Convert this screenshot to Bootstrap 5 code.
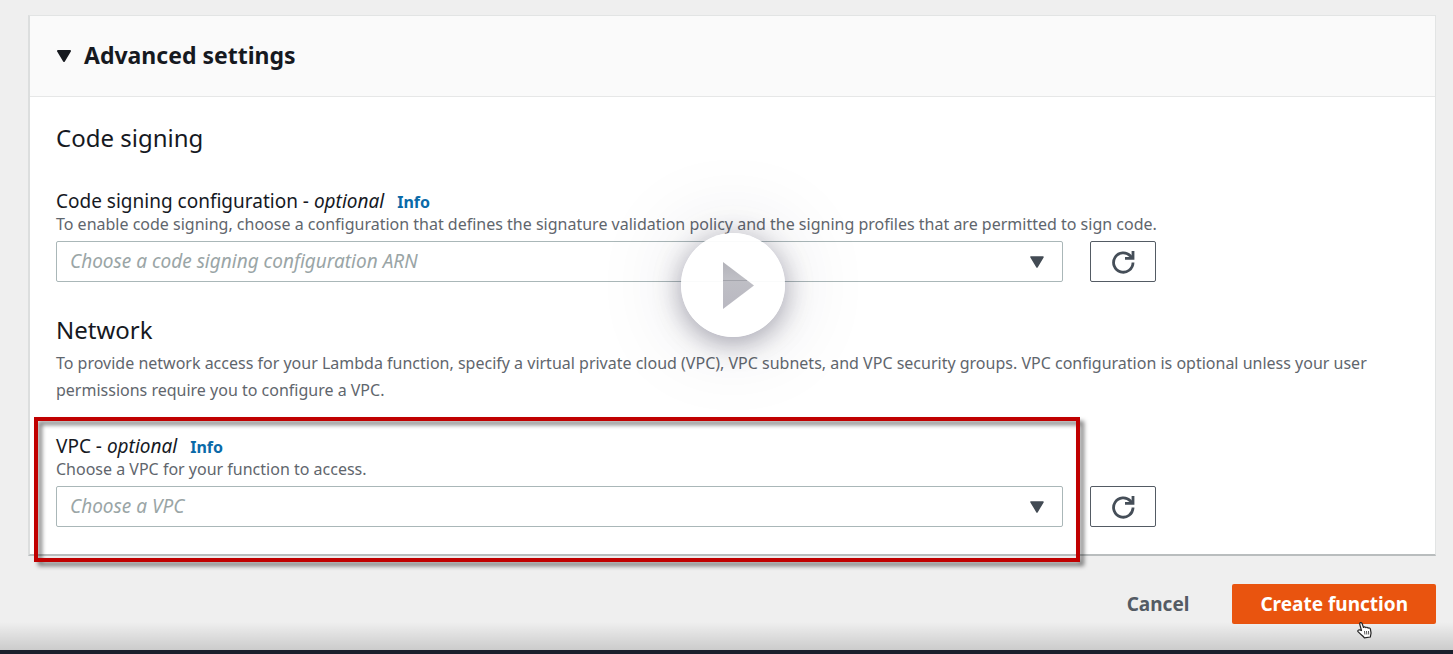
<!DOCTYPE html>
<html lang="en">
<head>
<meta charset="utf-8">
<meta name="viewport" content="width=device-width, initial-scale=1">
<title>Create function</title>
<link href="https://cdn.jsdelivr.net/npm/bootstrap@5.3.0/dist/css/bootstrap.min.css" rel="stylesheet">
<style>
  body { font-family: "Noto Sans", "Open Sans", sans-serif; font-size: 16px; line-height: 24px; color: #16191f; background: #efefef; }
  .page-main { padding: 15px 17px 0 28px; }
  .panel { border: 1px solid #e2e4e4; border-left: 2px solid #dcdede; border-bottom: 2px solid #b9bdbe; border-radius: 0; background: #fff; }
  .panel > .card-header { padding: 23px 26px 25px; background: #fafafa; border-bottom: 1px solid #e6e7e7; border-radius: 0; }
  .panel > .card-body { padding: 25px 26px 27px; }
  .toggle-btn { gap: 12px; font-size: 23px; line-height: 32px; color: #16191f; background: none; }
  .section-title { font-size: 24px; line-height: 32px; font-weight: 400; margin: 0; }
  .field-row { display: grid; grid-template-columns: minmax(0, 1fr) 66px; column-gap: 27px; max-width: 1100px; align-items: end; }
  .field-label { font-size: 19px; line-height: 23px; }
  .info-link { font-size: 16px; font-weight: 700; color: #0a6aa8; text-decoration: none; margin-left: 8px; }
  .hint { font-size: 16px; line-height: 21px; color: #5f666d; margin-bottom: 6px; }
  .intro { font-size: 16px; line-height: 27px; color: #5f666d; margin-bottom: 27px; }
  .pick { height: 41px; padding: 0 40px 0 13px; border: 1px solid #aab7b8; border-radius: 2px; font-size: 19px; font-style: italic; color: #9aa5a6; background-color: #fff;
    background-image: url("data:image/svg+xml,%3Csvg xmlns='http://www.w3.org/2000/svg' viewBox='0 0 14 12'%3E%3Cpath d='M1 1h12L7 11z' fill='%23434b54' stroke='%23434b54' stroke-width='1.5' stroke-linejoin='round'/%3E%3C/svg%3E"); background-position: right 18px center; background-size: 14px 12px; }
  .reload { height: 41px; border: 1px solid #545b64; border-radius: 2px; background: #fff; color: #454e58; }
  .marker { inset: -14px -17px -35px -22px; border: 4px solid #c00000; filter: drop-shadow(4px 4px 2px rgba(0,0,0,.5)); pointer-events: none; }
  .play { width: 104px; height: 104px; border-radius: 50%; background: rgba(255,255,255,.94); box-shadow: 0 6px 28px rgba(40,38,66,.4), 0 0 90px rgba(40,38,66,.15); }
  .actions { padding: 28px 0 20px; gap: 15px; }
  .actions .btn { height: 40px; padding: 0 28px; border-radius: 2px; font-size: 19px; font-weight: 700; line-height: 24px; }
  .btn-plain { color: #545b64; }
  .btn-create, .btn-create:hover { color: #fff; background: #e9540f; }
  .shade { height: 28px; margin-top: -28px; background: linear-gradient(rgba(0,0,0,0), rgba(0,0,0,.15)); }
  .strip { height: 4px; background: #1a202c; }
  .pointer { right: 79px; bottom: 15px; }
</style>
</head>
<body>
<div class="d-flex flex-column min-vh-100">
  <main class="page-main">
    <section class="card panel">
      <div class="card-header d-flex align-items-center">
        <h1 class="m-0 lh-1">
          <button class="toggle-btn border-0 p-0 d-flex align-items-center fw-bold" type="button" aria-expanded="true">
            <svg width="16" height="14" viewBox="0 0 16 14" aria-hidden="true"><path d="M2 3h12L8 13z" fill="#16191f" stroke="#16191f" stroke-width="2" stroke-linejoin="round"/></svg>
            Advanced settings
          </button>
        </h1>
      </div>
      <div class="card-body">
        <h2 class="section-title">Code signing</h2>
        <div class="mt-4 pt-2">
          <div class="field-label pt-1"><label for="signing">Code signing configuration - <em>optional</em></label> <a class="info-link" href="#">Info</a></div>
          <div class="hint">To enable code signing, choose a configuration that defines the signature validation policy and the signing profiles that are permitted to sign code.</div>
        </div>
        <div class="field-row">
          <select class="form-select pick" id="signing"><option>Choose a code signing configuration ARN</option></select>
          <button class="reload d-flex align-items-center justify-content-center" type="button" aria-label="Refresh configurations">
            <svg width="24" height="24" viewBox="0 0 24 24" fill="none" stroke="currentColor" stroke-width="2.8" aria-hidden="true"><path d="M22 12.500A9.700 9.700 0 1 1 19.500 6L21.500 8"/><path d="M22 1v7.400h-8"/></svg>
          </button>
        </div>
        <h2 class="section-title mt-4 pt-2">Network</h2>
        <p class="intro mt-1">To provide network access for your Lambda function, specify a virtual private cloud (VPC), VPC subnets, and VPC security groups. VPC configuration is optional unless your user permissions require you to configure a VPC.</p>
        <div class="field-row">
          <div class="position-relative">
            <div class="field-label pt-1"><label for="vpc">VPC - <em>optional</em></label> <a class="info-link" href="#">Info</a></div>
            <div class="hint">Choose a VPC for your function to access.</div>
            <select class="form-select pick" id="vpc"><option>Choose a VPC</option></select>
            <div class="marker position-absolute"></div>
          </div>
          <button class="reload d-flex align-items-center justify-content-center" type="button" aria-label="Refresh VPCs">
            <svg width="24" height="24" viewBox="0 0 24 24" fill="none" stroke="currentColor" stroke-width="2.8" aria-hidden="true"><path d="M22 12.500A9.700 9.700 0 1 1 19.500 6L21.500 8"/><path d="M22 1v7.400h-8"/></svg>
          </button>
        </div>
      </div>
      <button class="play border-0 p-0 position-absolute top-50 start-50 translate-middle" type="button" aria-label="Play">
        <svg width="104" height="104" viewBox="0 0 104 104" class="d-block" aria-hidden="true">
          <defs><linearGradient id="tri" x1="0" y1="0" x2="0" y2="1"><stop offset="0" stop-color="#b3b3ba"/><stop offset=".35" stop-color="#bfbfc5"/><stop offset="1" stop-color="#b9b8c1"/></linearGradient></defs>
          <path d="M42 29v47l31-23.500z" fill="url(#tri)"/><path d="M42 47.500h24" stroke="#a3a4ab"/>
        </svg>
      </button>
    </section>
    <div class="actions d-flex justify-content-end">
      <button class="btn btn-plain border-0" type="button">Cancel</button>
      <button class="btn btn-create border-0" type="button">Create function</button>
    </div>
  </main>
  <div class="mt-auto position-relative">
    <div class="shade"></div>
    <div class="strip"></div>
    <svg class="pointer position-absolute" width="18" height="18" viewBox="0 0 18 18" aria-hidden="true"><path d="M5.500 9.500L3.800 3.500c-.6-2 1.800-2.600 2.400-.8L7.500 6.500c.5-1 2-.8 2.300.2.600-.8 1.900-.5 2.200.5.700-.6 2.200-.2 2.400.9l.6 3.500c.2 1.500-.6 2.300-.6 4.400l-6 .8C7.200 15 4 13 2 10.700 1 9.200 3.500 8 5.500 9.500z" fill="#fff" stroke="#222" stroke-width="1.200" stroke-linejoin="round"/><path d="M8.500 10l.4 3.500M10.500 10l.3 3.500M12.500 10l.2 3.500" stroke="#555"/></svg>
  </div>
</div>
<script src="https://cdn.jsdelivr.net/npm/bootstrap@5.3.0/dist/js/bootstrap.bundle.min.js"></script>
</body>
</html>
